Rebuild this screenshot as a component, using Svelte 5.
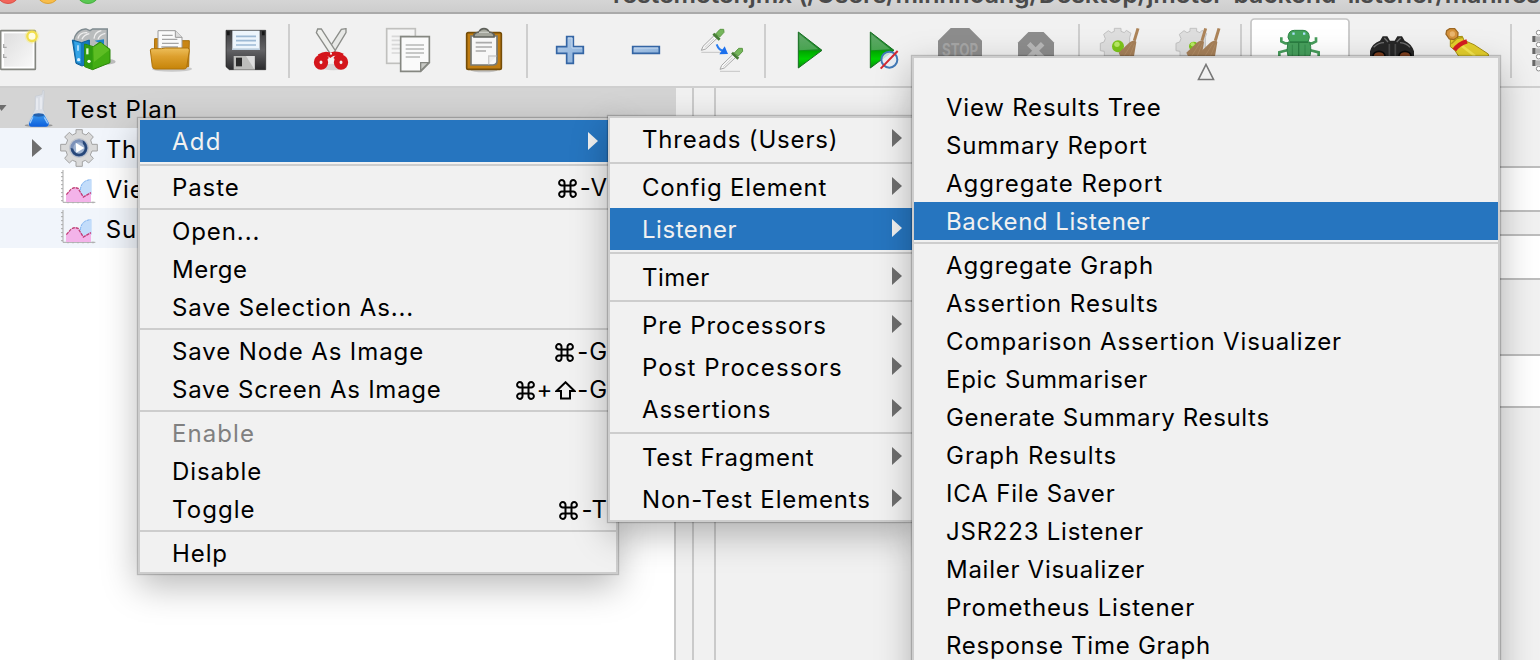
<script>
  const tools = [
    { id: 'new', box: '-60 42 228 216' },
    { id: 'templates', box: '168 42 228 216' },
    { id: 'open', box: '396 42 228 216' },
    { id: 'save', box: '624 42 228 216' },
    { sep: true },
    { id: 'cut', box: '72 42 228 216' },
    { id: 'copy', box: '300 42 228 216' },
    { id: 'paste', box: '528 42 228 216' },
    { sep: true },
    { id: 'plus', box: '-24 42 228 216' },
    { id: 'minus', box: '204 42 228 216' },
    { id: 'toggle', box: '432 42 228 216' },
    { sep: true },
    { id: 'start', box: '-60 42 228 216' },
    { id: 'startNoPause', box: '168 42 228 216' },
    { id: 'stop', box: '396 42 228 216' },
    { id: 'shutdown', box: '624 42 228 216' },
    { sep: true },
    { id: 'clear', box: '72 42 228 216' },
    { id: 'clearAll', box: '300 42 228 216' },
    { sep: true },
    { id: 'bug', box: '558 42 324 216', wide: true },
    { id: 'search', box: '192 42 228 216' },
    { id: 'searchReset', box: '420 42 228 216' },
    { sep: true },
    { id: 'functions', box: '678 42 228 216' }
  ];

  // `fit` is the extra width in pixels spread over the letters of a label.
  const mainMenu = [
    { t: 'Add', fit: 1, sub: true, hot: true, big: true }, null,
    { t: 'Paste', key: '-V' }, null,
    { t: 'Open...' }, { t: 'Merge', fit: -2 }, { t: 'Save Selection As...' }, null,
    { t: 'Save Node As Image', key: '-G' }, { t: 'Save Screen As Image', fit: -3, key: '-G', shift: true }, null,
    { t: 'Enable', fit: 1, off: true }, { t: 'Disable' }, { t: 'Toggle', fit: 1, key: '-T' }, null,
    { t: 'Help' }
  ];
  const addMenu = [
    { t: 'Threads (Users)', fit: -1 }, null,
    { t: 'Config Element', fit: -1 }, { t: 'Listener', fit: -3, hot: true }, null,
    { t: 'Timer', fit: -2 }, null,
    { t: 'Pre Processors' }, { t: 'Post Processors', fit: 3 }, { t: 'Assertions' }, null,
    { t: 'Test Fragment', fit: -2 }, { t: 'Non-Test Elements', fit: -1 }
  ];
  const listeners = [
    { t: 'View Results Tree', fit: -2 }, { t: 'Summary Report', fit: -1 }, { t: 'Aggregate Report', fit: 2 },
    { t: 'Backend Listener', fit: -6, hot: true }, null,
    { t: 'Aggregate Graph' }, { t: 'Assertion Results', fit: 1 }, { t: 'Comparison Assertion Visualizer', fit: -1 },
    { t: 'Epic Summariser', fit: -3 }, { t: 'Generate Summary Results', fit: -6 }, { t: 'Graph Results', fit: 1 },
    { t: 'ICA File Saver', fit: -1 }, { t: 'JSR223 Listener', fit: -2 }, { t: 'Mailer Visualizer', fit: -3 },
    { t: 'Prometheus Listener', fit: -2 }, { t: 'Response Time Graph', fit: -3 }
  ];
</script>

{#snippet play(x)}
  <path d="M{x} 96L{x + 71} 151L{x} 204Z" fill="url(#green)" stroke="#176d22" stroke-width="3" />
  <path d="M{x + 3} 103L{x + 60} 148L{x + 3} 151Z" fill="#fff" opacity=".22" />
{/snippet}

{#snippet octagon(x, w, y, h)}
  <path d="M{x + w * .29} {y}H{x + w * .71}L{x + w} {y + h * .29}V{y + h * .71}L{x + w * .71} {y + h}H{x + w * .29}L{x} {y + h * .71}V{y + h * .29}Z" fill="#8d8d8d" />
{/snippet}

{#snippet gear(x, g)}
  <g fill="#dedede" stroke="#c2c2c2" stroke-width="3">
    <path d="M{x + 42} 94V85H{x + 62}V94L{x + 72} 98L{x + 78} 91L{x + 92} 100L{x + 88} 112V168H{x + 12}V154L{x} 152V130L{x + 11} 126L{x + 15} 116L{x + 10} 103L{x + 24} 92L{x + 33} 98Z" />
  </g>
  <circle cx={x + 53} cy="139" r={g} fill="#7cc51a" />
  <circle cx={x + 50} cy="133" r={g * .45} fill="#b9ea65" />
{/snippet}

{#snippet broom(x)}
  <path d="M{x + 58} 85L{x + 47} 122" stroke="#ad8459" stroke-width="9" />
  <path d="M{x + 49} 121C{x + 31} 123 {x + 22} 140 {x} 158L{x + 8} 175H{x + 45}L{x + 53} 126Z" fill="#a68059" />
  <path d="M{x + 40} 130L{x + 16} 168M{x + 47} 133L{x + 32} 170" stroke="#b28d65" stroke-width="3" />
{/snippet}

{#snippet icon(id)}
  {#if id === 'new'}
    <rect x="2" y="92" width="104" height="116" rx="2" fill="#fff" stroke="#858781" stroke-width="5" />
    <rect x="12" y="100" width="86" height="100" fill="url(#paper)" />
    <path d="M11 132v10h9M11 162v10h9" stroke="#aaa" stroke-width="4" fill="none" />
    <circle cx="96" cy="109" r="22" fill="#f7ec6c" opacity=".35" />
    <circle cx="96" cy="109" r="14" fill="#fffde0" stroke="#f2df4b" stroke-width="7" />
  {:else if id === 'templates'}
    <ellipse cx="315" cy="185" rx="32" ry="9" fill="#555" opacity=".35" />
    <path d="M222 126C222 98 244 86 258 87L270 92L278 87H322V148L270 160Z" fill="#b9bcbd" stroke="#7f8b90" stroke-width="4" />
    <path d="M234 116Q238 96 262 98M246 118Q252 104 268 101M282 116Q284 96 304 92M294 118Q298 104 316 100" fill="none" stroke="#eee" stroke-width="4" />
    <path d="M217 120L245 128L268 120V190L246 198L228 190Z" fill="#1679bd" stroke="#0c5f9a" stroke-width="3" />
    <path d="M222 124L242 130V190L230 186Z" fill="#35a4e6" />
    <path d="M284 122L312 118V136L300 130Z" fill="#1f83c6" />
    <path d="M254 132L280 140L300 126L330 148V188L278 209L254 200Z" fill="#43ad13" stroke="#2c870b" stroke-width="3" />
    <path d="M256 134L278 141V206L256 198Z" fill="#2f9c10" />
    <path d="M280 142L303 128L328 150L282 186Z" fill="#6cc62c" opacity=".65" />
    <path d="M262 145v18" stroke="#dff6d0" stroke-width="7" />
    <circle cx="267" cy="184" r="5" fill="#fff" /><circle cx="236" cy="179" r="5" fill="#d8efff" />
    <path d="M234 136v16" stroke="#bfe5ff" stroke-width="5" />
  {:else if id === 'open'}
    <ellipse cx="516" cy="207" rx="60" ry="8" fill="#555" opacity=".25" />
    <path d="M464 116H484V130H540V122H568L566 200H462Z" fill="#c98614" stroke="#a8700d" stroke-width="3" />
    <path d="M474 92H526L546 112V150H474Z" fill="#fafafa" stroke="#9a9a9a" stroke-width="3" />
    <path d="M526 92V112H546" fill="#ddd" stroke="#999" stroke-width="3" />
    <path d="M486 106H518M486 118H532M486 130H536M484 141H534" stroke="#a5a5a5" stroke-width="4" />
    <path d="M451 150Q452 145 460 146H484L496 144H562Q569 144 568 152L560 202Q559 207 552 207H466Q459 207 457 200Z" fill="url(#folder)" stroke="#ae7209" stroke-width="3" />
  {:else if id === 'save'}
    <path d="M678 91H797V209H688L678 200Z" fill="url(#disk)" stroke="#222" stroke-width="2" />
    <path d="M681 94h8v12h-8zM786 94h8v12h-8z" fill="#171717" />
    <path d="M697 92H779V150H697Z" fill="#edf5fc" />
    <path d="M697 145H779V150H697Z" fill="#bccddd" />
    <path d="M708 109H768M708 122H768M708 135H768" stroke="#9db9d4" stroke-width="5" />
    <path d="M701 168H764V209H701Z" fill="#bdbdbb" /><path d="M738 168L764 209V168Z" fill="#ddd" />
    <rect x="708" y="173" width="18" height="26" fill="#2b2b2b" />
  {:else if id === 'cut'}
    <ellipse cx="190" cy="201" rx="40" ry="10" fill="#888" opacity=".25" />
    <path d="M228 86L214 88L174 150L188 164L228 98Z" fill="#e7e8e6" stroke="#8b8d89" stroke-width="4" />
    <path d="M139 98L143 87L154 87L196 152L184 166Z" fill="#eeefec" stroke="#8b8d89" stroke-width="4" />
    <path d="M147 169Q168 156 181 166Q195 155 218 167" stroke="#d4161c" stroke-width="13" fill="none" />
    <ellipse cx="153" cy="187" rx="13" ry="14" fill="none" stroke="#d4161c" stroke-width="17" />
    <ellipse cx="213" cy="187" rx="13" ry="14" fill="none" stroke="#d4161c" stroke-width="17" />
    <path d="M158 181L173 169M209 181L194 169" stroke="#d4161c" stroke-width="12" />
    <circle cx="183" cy="161" r="3" fill="#fff" />
  {:else if id === 'copy'}
    <rect x="350" y="86" width="86" height="104" fill="#f5f5f5" stroke="#c0c0be" stroke-width="5" />
    <path d="M365 109H420M365 121H420M365 134H420M365 146H400M365 159H400" stroke="#d8d8d8" stroke-width="5" />
    <path d="M392 110H478V188L452 214H392Z" fill="#fafafa" stroke="#858781" stroke-width="5" />
    <path d="M476 188H452V212Z" fill="#c8c9c5" stroke="#858781" stroke-width="4" />
    <path d="M407 135H462M407 147H462M407 159H462M407 171H450" stroke="#b7b8b6" stroke-width="5" />
  {:else if id === 'paste'}
    <ellipse cx="642" cy="211" rx="40" ry="6" fill="#555" opacity=".3" />
    <rect x="590" y="98" width="104" height="110" rx="5" fill="#c17d11" stroke="#754d08" stroke-width="5" />
    <path d="M603 108H681V184Q681 195 668 195H603Z" fill="#f7f7f7" stroke="#777975" stroke-width="5" />
    <path d="M679 168H656V193" fill="#eee" stroke="#cacaca" stroke-width="4" />
    <path d="M617 128H666M617 141H666M617 153H648" stroke="#aaa" stroke-width="5" />
    <path d="M612 111V103Q620 96 627 96Q631 86 642 86Q653 86 657 96Q666 96 672 103V111Z" fill="#a4a69c" stroke="#5e605a" stroke-width="5" />
    <path d="M627 97H657" stroke="#c8cac3" stroke-width="4" />
  {:else if id === 'plus'}
    <path d="M80 110H100V140H130V160H100V190H80V160H50V140H80Z" fill="url(#blue)" stroke="#3465a4" stroke-width="5" />
    <path d="M84 114H96V144H126" fill="none" stroke="#c5d9ef" stroke-width="3" />
  {:else if id === 'minus'}
    <path d="M278 140H358V160H278Z" fill="url(#blue)" stroke="#3465a4" stroke-width="5" />
    <path d="M282 144H354" stroke="#c5d9ef" stroke-width="3" />
  {:else if id === 'toggle'}
    {#each [[0, 0], [56, 57]] as p}
      <g transform="translate({p[0]} {p[1]})">
        <path d="M484 157H544" stroke="#aaa" stroke-width="3" opacity=".6" />
        <path d="M484 151L489 139L522 107L531 115L497 147Z" fill="#f8f8f8" stroke="#a6a6a6" stroke-width="3" />
        <path d="M494 143L522 116" stroke="#ccc" stroke-width="3" />
        <path d="M527 102L540 88H551L552 97L539 111Z" fill="#75b65b" stroke="#5c9944" stroke-width="3" />
        <path d="M520 101L539 119" stroke="#457d34" stroke-width="8" />
      </g>
    {/each}
    <path d="M530 133Q536 150 549 152" fill="none" stroke="#2a7df0" stroke-width="6" />
    <path d="M554 139L564 162L538 163Z" fill="#1c70ed" />
  {:else if id === 'start'}
    {@render play(25)}
  {:else if id === 'startNoPause'}
    {@render play(241)}
    <circle cx="298" cy="179" r="24" fill="#e9eef6" fill-opacity=".85" stroke="#427ab8" stroke-width="6" />
    <path d="M272 206L323 153" stroke="#d42830" stroke-width="6" />
  {:else if id === 'stop'}
    {@render octagon(444, 132, 84, 132)}
    <text x="456" y="168" font-size="52" font-weight="700" letter-spacing="0" textLength="108" lengthAdjust="spacingAndGlyphs" fill="#a6a6a6">STOP</text>
  {:else if id === 'shutdown'}
    {@render octagon(684, 108, 96, 108)}
    <path d="M716 131L758 173M758 131L716 173" stroke="#b8b8b8" stroke-width="15" />
  {:else if id === 'clear'}
    {@render gear(121, 18)}
    {@render broom(176)}
  {:else if id === 'clearAll'}
    {@render gear(348, 14)}
    {@render broom(379)}
    {@render broom(419)}
  {:else if id === 'bug'}
    <rect x="573" y="57" width="294" height="220" rx="10" fill="#fff" stroke="#c4c4c4" stroke-width="5" />
    <path d="M664 112V124L676 130H694M768 112V124L756 130H740M658 168V157L684 150M776 168V157L748 150" fill="none" stroke="#479c5b" stroke-width="8" />
    <path d="M684 112Q685 91 703 91H729Q747 91 748 112L744 126H690Z" fill="#43a35b" stroke="#2d8446" stroke-width="3" />
    <path d="M684 126H749Q757 152 747 176H686Q677 152 684 126Z" fill="#469f5c" stroke="#2d8446" stroke-width="3" />
    <path d="M690 127H744M716 128V176" stroke="#2a7d41" stroke-width="4" />
    <path d="M697 134V172M735 134V172" stroke="#338a4b" stroke-width="3" />
    <path d="M697 101h7M729 101h7" stroke="#ade0ff" stroke-width="7" />
  {:else if id === 'search'}
    <path d="M240 172V154Q246 130 270 122L278 109H292L300 122H314L322 109H336L344 122Q366 132 372 154V172Z" fill="#262626" />
    <path d="M251 142Q265 128 282 128M330 128Q350 130 360 142M283 114L294 126M332 114L320 126" fill="none" stroke="#707070" stroke-width="4" />
    <path d="M298 132V168M316 132V168" stroke="#494949" stroke-width="5" />
    <ellipse cx="267" cy="168" rx="18" ry="14" fill="#81411f" stroke="#090909" stroke-width="5" />
    <ellipse cx="345" cy="168" rx="18" ry="14" fill="#81411f" stroke="#090909" stroke-width="5" />
  {:else if id === 'searchReset'}
    <path d="M481 112L517 109L522 121L552 134L595 162V175H510L494 150L481 140Z" fill="#e4cf2c" stroke="#a69012" stroke-width="3" />
    <path d="M516 138L555 168" stroke="#f5e650" stroke-width="8" />
    <path d="M479 86L494 86L504 98L503 112L492 119L478 117L468 102L470 92Z" fill="#d5923c" stroke="#9d6721" stroke-width="4" />
    <circle cx="487" cy="102" r="8" fill="#e9b56e" />
    <path d="M493 150Q506 131 531 124" fill="none" stroke="#d51d21" stroke-width="13" />
    <path d="M484 131L500 116L519 112" fill="none" stroke="#b49b17" stroke-width="4" />
  {:else}
    <path d="M744 90V215H800V90Z" fill="#fafafa" />
    {#each [98, 134, 170, 206] as y}
      <circle cx="746" cy={y} r="7" fill="#fff" stroke="#8b8b8b" stroke-width="3" />
    {/each}
    {#each [117, 153, 189] as y}
      <path d="M727 {y}H737" stroke="#686868" stroke-width="18" />
      <path d="M737 {y}H750" stroke="#b5b5b5" stroke-width="16" />
    {/each}
  {/if}
{/snippet}

{#snippet chart()}
  <svg class="ticon" viewBox="180 272 116 120">
    <path d="M189 278V375H286" fill="none" stroke="#a9a9a9" stroke-width="3" />
    <path d="M183 286h6M183 298h6M183 310h6M183 322h6M183 334h6M183 346h6M183 358h6M183 370h6M204 378v-5M219 378v-5M234 378v-5M249 378v-5M264 378v-5M279 378v-5" stroke="#a9a9a9" stroke-width="3" />
    <path d="M238 345Q240 306 275 306V352L252 362Z" fill="#c2dcfa" />
    <path d="M241 338Q244 309 273 307" fill="none" stroke="#85b5ef" stroke-width="3" stroke-dasharray="9 3" />
    <path d="M198 353Q216 332 231 332L250 357L273 346V374H198Z" fill="#f3b3e9" />
    <path d="M199 352L212 337Q222 328 234 333L250 359L273 346" fill="none" stroke="#c13c77" stroke-width="4" stroke-dasharray="10 2" />
  </svg>
{/snippet}

{#snippet row(item)}
  {#if item === null}
    <div class="line"></div>
  {:else}
    <div class="item" class:hot={item.hot} class:off={item.off} class:big={item.big}>
      <span style="letter-spacing: {0.9 + (item.fit ?? 0) / item.t.length}px">{item.t}</span>
      {#if item.key}
        <span class="key" class:shift={item.shift}>
          <svg width="19" height="19" viewBox="0 0 19 19"><path d="M6.5 6.5V4A2.7 2.7 0 1 0 4 6.5H15A2.7 2.7 0 1 0 12.5 4V15A2.7 2.7 0 1 0 15 12.5H4A2.7 2.7 0 1 0 6.5 15Z" /></svg>{#if item.shift}<span class="plus">+</span><svg width="21" height="19" viewBox="0 0 21 19"><path d="M10.5 1.3L19.500 10H15V17.5H6V10H1.500Z" /></svg>{/if}<span>{item.key}</span>
        </span>
      {/if}
      {#if item.sub}<svg class="arrow" width="10" height="18"><path d="M0 0L10 9L0 18Z" /></svg>{/if}
    </div>
  {/if}
{/snippet}

<div class="window">
  <header>
    <i class="red"></i><i class="amber"></i><i class="green"></i>
    <b>Testemeter.jmx (/Users/minhhoang/Desktop/jmeter-backend-listener/manifest</b>
  </header>

  <svg class="defs" width="0" height="0">
    <defs>
      <linearGradient id="green" x2="0" y2="1"><stop stop-color="#398f45" /><stop offset=".5" stop-color="#168b20" /><stop offset=".54" stop-color="#00a800" /><stop offset=".75" stop-color="#00d000" /><stop offset="1" stop-color="#078c0d" /></linearGradient>
      <linearGradient id="paper" x2="1" y2="1"><stop stop-color="#dedede" /><stop offset="1" stop-color="#f8f8f8" /></linearGradient>
      <linearGradient id="folder" x2="0" y2="1"><stop stop-color="#edbf5b" /><stop offset=".4" stop-color="#dda02e" /><stop offset="1" stop-color="#c68409" /></linearGradient>
      <linearGradient id="disk" x2="0" y2="1"><stop stop-color="#3a3a3c" /><stop offset=".5" stop-color="#636366" /><stop offset="1" stop-color="#2b2b2d" /></linearGradient>
      <linearGradient id="blue" x2="1" y2="1"><stop stop-color="#b4cce8" /><stop offset="1" stop-color="#85add9" /></linearGradient>
      <linearGradient id="flask" x2="0" y2="1"><stop stop-color="#3a97ed" /><stop offset="1" stop-color="#0c5fdd" /></linearGradient>
    </defs>
  </svg>

  <nav>
    {#each tools as tool}
      {#if tool.sep}
        <div class="sep"></div>
      {:else}
        <svg class="tool" class:wide={tool.wide} viewBox={tool.box}>{@render icon(tool.id)}</svg>
      {/if}
    {/each}
  </nav>

  <main>
    <section class="tree">
      <div class="node root">
        <svg class="twist" viewBox="0 0 20 40"><path d="M-4 17H5L0 23Z" /></svg>
        <svg class="ticon flask" viewBox="70 24 108 120">
          <ellipse cx="117" cy="136" rx="42" ry="5" fill="#555" opacity=".5" />
          <path d="M107 49L127 44L129 31L133 32V50L130 87L148 126Q151 137 140 138H94Q83 138 87 126L106 87Z" fill="#dadee6" stroke="#c4cad2" stroke-width="2" />
          <path d="M101 104H134L147 128Q149 139 138 140H96Q85 139 88 128Z" fill="url(#flask)" />
          <ellipse cx="117" cy="105" rx="16" ry="5" fill="#2460ac" />
          <path d="M112 55V90M124 52V88" stroke="#edf0f5" stroke-width="4" />
          <path d="M99 112L91 130M134 112L144 130" stroke="#9bcafa" stroke-width="4" />
        </svg>
        <span>Test Plan</span>
      </div>
      <div class="node child stripe">
        <svg class="twist" viewBox="0 0 28 40"><path d="M0 11L10 20.500L0 29Z" /></svg>
        <svg class="ticon" viewBox="180 147 116 120">
          <g fill="#d9d9d9" stroke="#a2a2a2" stroke-width="3">
            <path d="M228 163V152H247V163L258 168L266 160L280 174L272 183L276 196H292V216H276L271 228L280 238L266 252L256 244L247 248V262H228V248L217 244L208 252L194 238L202 228L198 216H182V196H198L203 183L194 174L208 160L217 168Z" />
          </g>
          <circle cx="237" cy="207" r="28" fill="#7b91b9" stroke="#c0c4cc" stroke-width="4" />
          <path d="M212 207A25 25 0 0 0 262 207Q260 190 248 184Q255 222 212 207Z" fill="#274779" />
          <circle cx="237" cy="207" r="17" fill="#9fb3d0" />
          <path d="M227 191L253 207L229 221Z" fill="#fff" />
        </svg>
        <span>Thread Group</span>
      </div>
      <div class="node child">
        <i class="twist"></i>{@render chart()}<span>View Results Tree</span>
      </div>
      <div class="node child stripe">
        <i class="twist"></i>{@render chart()}<span>Summary Report</span>
      </div>
    </section>
    <div class="divider"></div>
    <div class="gutter"></div>
    <section class="form">
      <div class="field f1"></div>
      <div class="field f2"></div>
      <div class="field f3"></div>
    </section>
  </main>

  <div class="menu main-menu">{#each mainMenu as item}{@render row(item)}{/each}</div>
  <div class="menu add-menu">{#each addMenu as item}{@render row(item && { ...item, sub: true, big: true })}{/each}</div>
  <div class="menu listener-menu">
    <div class="scroll"><svg width="20" height="18"><path d="M10 1.500L17.500 16.500H2.500Z" fill="none" stroke="#777" stroke-width="1.600" /></svg></div>
    {#each listeners as item}{@render row(item)}{/each}
  </div>
</div>

<style>
  :global(body) { margin: 0; overflow: hidden; }
  .window {
    position: relative; width: 1540px; height: 660px; overflow: hidden;
    background: #f1f1f1; display: flex; flex-direction: column;
    font: 24px/1 Inter, "Liberation Sans", sans-serif; letter-spacing: .9px; color: #000;
  }
  header {
    position: relative; flex: none; height: 12px; overflow: hidden;
    background: linear-gradient(#d5d5d5, #cdcdcd); border-bottom: 2px solid #aaa;
  }
  header i { position: absolute; top: -20px; width: 22px; height: 22px; border-radius: 50%; border: 1px solid; }
  header .red { left: -4px; background: #f2655a; border-color: #d9534a; }
  header .amber { left: 36px; background: #f8bd4a; border-color: #dba236; }
  header .green { left: 76px; background: #5ac853; border-color: #49ae40; }
  header b { position: absolute; left: 608px; top: -19px; font-weight: 600; font-size: 25px; line-height: 26px; letter-spacing: -.19px; color: #4a4a4a; white-space: nowrap; }
  .defs { position: absolute; }
  nav { flex: none; display: flex; height: 72px; margin-left: -20px; overflow: hidden; border-bottom: 2px solid #cfcfcf; }
  .tool { flex: none; width: 76px; height: 72px; }
  .tool.wide { width: 108px; }
  .sep { flex: none; width: 2px; height: 54px; margin: 10px 4px 0; background: #cecece; }
  main { flex: 1; display: flex; min-height: 0; }
  .tree { width: 674px; background: #fff; border-right: 2px solid #cacaca; }
  .node { display: flex; align-items: center; height: 40px; white-space: nowrap; }
  .node span { position: relative; top: 2px; }
  .root { background: #d4d4d4; margin-right: -2px; }
  .root .twist { width: 23px; overflow: visible; }
  .child { padding-left: 32px; }
  .stripe { background: #f1f5fb; }
  .twist { flex: none; width: 28px; height: 40px; fill: #6e6e6e; }
  .ticon { flex: none; width: 38.667px; height: 40px; margin-right: 7px; }
  .flask { width: 36px; margin-right: 7px; }
  .divider { width: 16px; border-right: 2px solid #cacaca; }
  .gutter { width: 20px; border-right: 2px solid #cacaca; }
  .form { flex: 1; padding-top: 78px; }
  .field { background: #fff; border-top: 2px solid #bdbdbd; border-bottom: 2px solid #bdbdbd; margin-left: 220px; }
  .f1 { height: 42px; margin-bottom: 22px; }
  .f2 { height: 42px; margin-bottom: 74px; }
  .f3 { height: 50px; }
  .menu {
    position: absolute; box-sizing: border-box; background: #f1f1f1; border: 2px solid #cdcdcd;
    box-shadow: 0 0 1px 1px rgba(0, 0, 0, .2), 0 12px 34px rgba(0, 0, 0, .28);
  }
  .main-menu { left: 138px; top: 118px; width: 480px; }
  .add-menu { left: 608px; top: 116px; width: 310px; }
  .listener-menu { left: 912px; top: 56px; width: 588px; height: 640px; }
  .item { display: flex; align-items: center; height: 38px; padding: 0 8px 0 32px; white-space: nowrap; }
  .item > span { position: relative; top: 1px; }
  .item.big { height: 42px; }
  .hot { background: #2675bf; color: #f1f1f1; }
  .off { color: #808080; }
  .line { height: 2px; margin: 2px 0; background: #cdcdcd; }
  .arrow { margin-left: auto; fill: #6e6e6e; }
  .main-menu .arrow { margin-right: 10px; }
  .add-menu .arrow { margin-right: 6px; position: relative; top: -1px; }
  .hot .arrow { fill: #f1f1f1; }
  .item > .key { margin-left: auto; display: flex; align-items: center; }
  .key svg { fill: none; stroke: #000; stroke-width: 2; margin-right: 3px; }
  .key .plus { margin-right: 2px; }
  .key.shift svg { margin-right: 1px; }
  .scroll { height: 28px; padding-bottom: 2px; display: flex; justify-content: center; align-items: center; }
</style>
